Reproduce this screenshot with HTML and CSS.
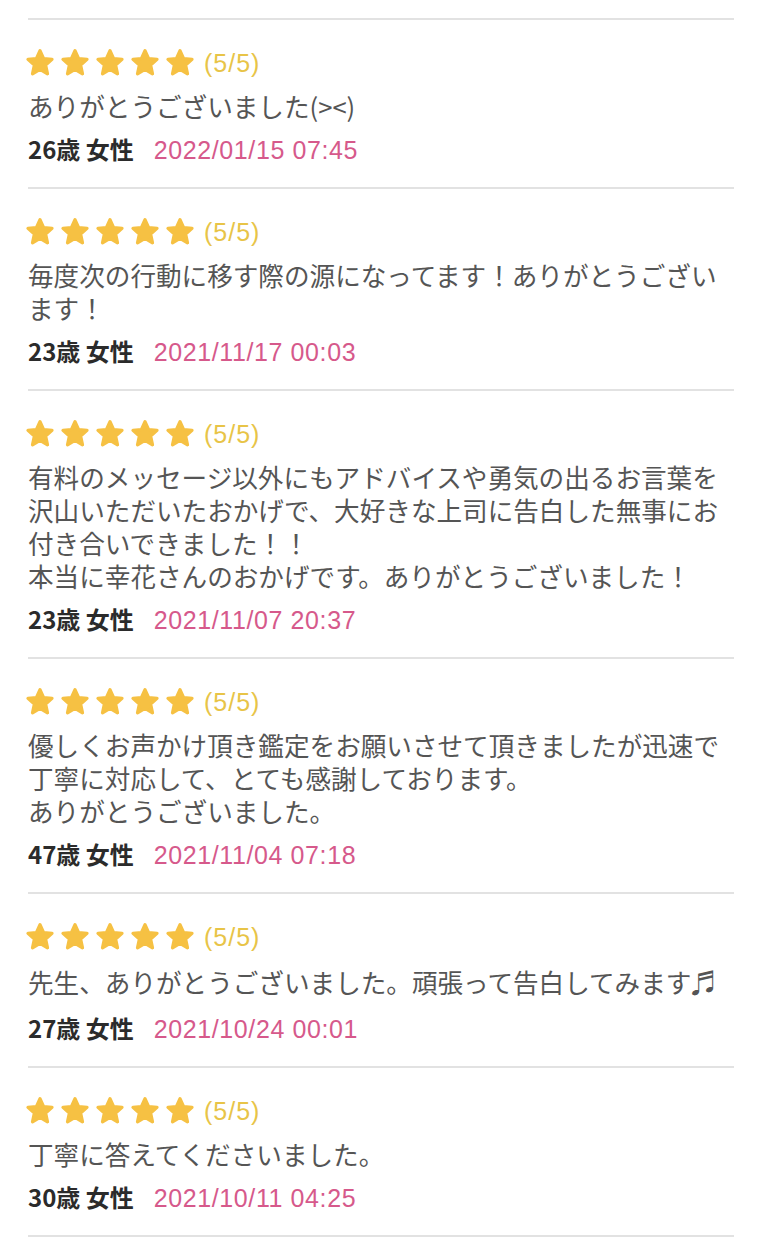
FILE: index.html
```html
<!DOCTYPE html>
<html lang="ja">
<head>
    <meta charset="UTF-8">
    <meta name="viewport" content="width=device-width, initial-scale=1.0">
    <title>口コミ一覧</title>
    <link rel="stylesheet" href="styles.css">
</head>
<body>
    <svg width="0" height="0" class="defs">
        <defs>
            <symbol id="star" viewBox="0 0 24 24">
                <polygon points="12,2.2 14.8,8.4 21.6,9.1 16.5,13.7 18,20.6 12,17.1 6,20.6 7.5,13.7 2.4,9.1 9.2,8.4"
                         fill="#f6c143" stroke="#f6c143" stroke-width="2.6" stroke-linejoin="round"/>
            </symbol>
        </defs>
    </svg>

    <ul class="reviews">
        <li class="review">
            <div class="rating">
                <span class="stars">
                    <svg><use href="#star"/></svg><svg><use href="#star"/></svg><svg><use href="#star"/></svg><svg><use href="#star"/></svg><svg><use href="#star"/></svg>
                </span>
                <span class="score">(5/5)</span>
            </div>
            <p class="comment">ありがとうございました(&gt;&lt;)</p>
            <p class="meta"><span class="who">26歳 女性</span><span class="date">2022/01/15 07:45</span></p>
        </li>
        <li class="review">
            <div class="rating">
                <span class="stars">
                    <svg><use href="#star"/></svg><svg><use href="#star"/></svg><svg><use href="#star"/></svg><svg><use href="#star"/></svg><svg><use href="#star"/></svg>
                </span>
                <span class="score">(5/5)</span>
            </div>
            <p class="comment">毎度次の行動に移す際の源になってます！ありがとうございます！</p>
            <p class="meta"><span class="who">23歳 女性</span><span class="date">2021/11/17 00:03</span></p>
        </li>
        <li class="review">
            <div class="rating">
                <span class="stars">
                    <svg><use href="#star"/></svg><svg><use href="#star"/></svg><svg><use href="#star"/></svg><svg><use href="#star"/></svg><svg><use href="#star"/></svg>
                </span>
                <span class="score">(5/5)</span>
            </div>
            <p class="comment">有料のメッセージ以外にもアドバイスや勇気の出るお言葉を沢山いただいたおかげで、大好きな上司に告白した無事にお付き合いできました！！<br>本当に幸花さんのおかげです。ありがとうございました！</p>
            <p class="meta"><span class="who">23歳 女性</span><span class="date">2021/11/07 20:37</span></p>
        </li>
        <li class="review">
            <div class="rating">
                <span class="stars">
                    <svg><use href="#star"/></svg><svg><use href="#star"/></svg><svg><use href="#star"/></svg><svg><use href="#star"/></svg><svg><use href="#star"/></svg>
                </span>
                <span class="score">(5/5)</span>
            </div>
            <p class="comment">優しくお声かけ頂き鑑定をお願いさせて頂きましたが迅速で丁寧に対応して、とても感謝しております。<br>ありがとうございました。</p>
            <p class="meta"><span class="who">47歳 女性</span><span class="date">2021/11/04 07:18</span></p>
        </li>
        <li class="review">
            <div class="rating">
                <span class="stars">
                    <svg><use href="#star"/></svg><svg><use href="#star"/></svg><svg><use href="#star"/></svg><svg><use href="#star"/></svg><svg><use href="#star"/></svg>
                </span>
                <span class="score">(5/5)</span>
            </div>
            <p class="comment">先生、ありがとうございました。頑張って告白してみます<span class="note">♬</span></p>
            <p class="meta"><span class="who">27歳 女性</span><span class="date">2021/10/24 00:01</span></p>
        </li>
        <li class="review">
            <div class="rating">
                <span class="stars">
                    <svg><use href="#star"/></svg><svg><use href="#star"/></svg><svg><use href="#star"/></svg><svg><use href="#star"/></svg><svg><use href="#star"/></svg>
                </span>
                <span class="score">(5/5)</span>
            </div>
            <p class="comment">丁寧に答えてくださいました。</p>
            <p class="meta"><span class="who">30歳 女性</span><span class="date">2021/10/11 04:25</span></p>
        </li>
    </ul>
</body>
</html>
```

FILE: styles.css
```css
body {
    margin: 0;
    padding: 0;
    background: #fff;
    color: #555;
    font-family: "Noto Sans CJK JP", "Noto Sans", sans-serif;
}

.defs {
    position: absolute;
}

.reviews {
    list-style: none;
    margin: 18px 28px 0;
    padding: 0;
}

.review {
    border-top: 2px solid #e2e2e2;
    padding: 27px 0 22px;
}

.review:last-child {
    border-bottom: 2px solid #e2e2e2;
}

.rating {
    display: flex;
    align-items: center;
    height: 32px;
}

.stars {
    display: flex;
    gap: 5px;
    margin-left: -3px;
}

.stars svg {
    width: 30px;
    height: 30px;
}

.score {
    margin-left: 9px;
    color: #e8c447;
    font-family: "Liberation Sans", "Noto Sans CJK JP", sans-serif;
    font-size: 25px;
    letter-spacing: 1px;
}

.comment {
    margin: 10px 0 0;
    font-size: 25.6px;
    line-height: 33px;
}

.note {
    line-height: 38px;
}

.meta {
    display: flex;
    align-items: baseline;
    height: 33px;
    margin: 10px 0 0;
    font-size: 24px;
    line-height: 33px;
}

.who {
    color: #2b2b2b;
    font-weight: bold;
}

.date {
    margin-left: 20px;
    color: #d6598b;
    font-family: "Liberation Sans", "Noto Sans CJK JP", sans-serif;
    font-size: 25px;
    letter-spacing: 0.6px;
}
```
